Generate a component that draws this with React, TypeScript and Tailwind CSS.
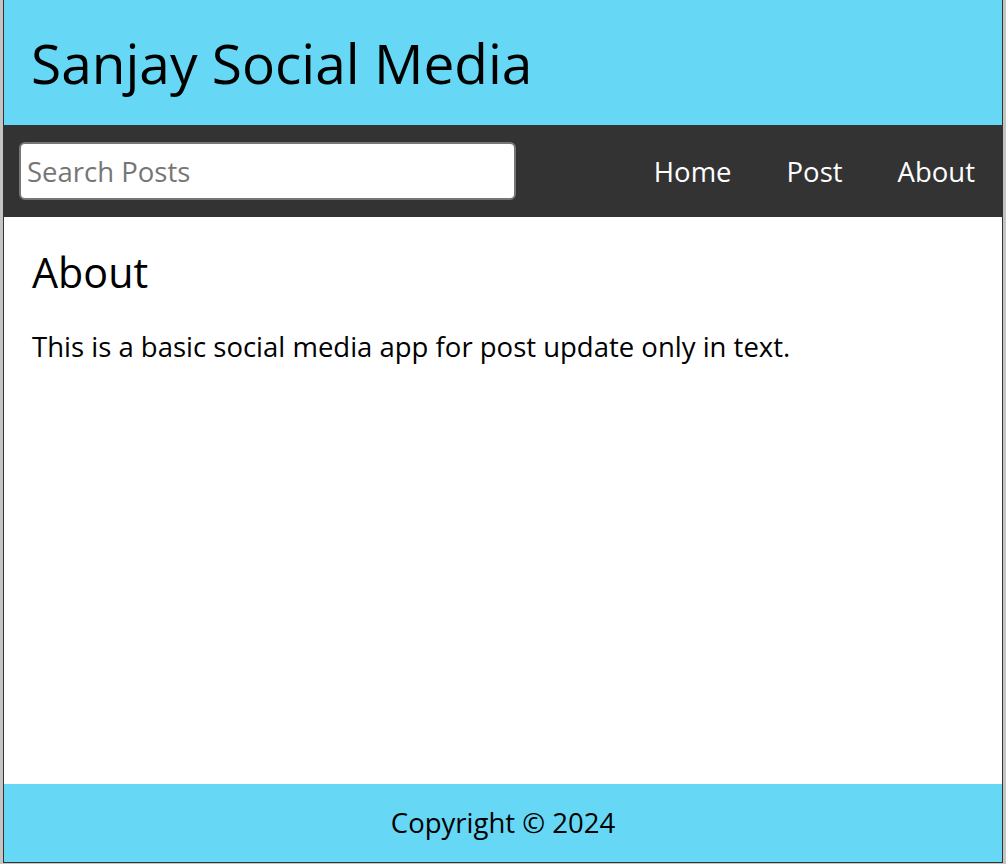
import React from 'react';

const App: React.FC = () => {
  return (
    <div className="h-[864px] bg-[#c4c4c4] px-[3px] pb-[1px] font-['Open_Sans',sans-serif]">
      <div className="h-full flex flex-col bg-white border-x border-b border-[#333]">
        {/* Header */}
        <header className="h-[125px] shrink-0 bg-[#66d8f5] flex items-center px-[27px]">
          <h1 className="text-[55px] leading-none text-black">Sanjay Social Media</h1>
        </header>

        {/* Nav */}
        <nav className="h-[92px] shrink-0 bg-[#333] flex items-center justify-between pl-[15px] pr-[27px]">
          <form className="w-[497px]" onSubmit={e => e.preventDefault()}>
            <input
              type="text"
              placeholder="Search Posts"
              className="w-full h-[58px] rounded-[6px] border-2 border-[#767676] bg-white px-[6px] text-[27.5px] text-black placeholder-[#767676] outline-none"
            />
          </form>
          <ul className="flex items-center gap-[55px] pt-[2px] text-[27.5px] text-white">
            <li>Home</li>
            <li>Post</li>
            <li>About</li>
          </ul>
        </nav>

        {/* Main */}
        <main className="flex-1 px-[28px] pt-[31px]">
          <h2 className="text-[41.25px] leading-[1.2] mb-[28px]">About</h2>
          <p className="text-[27.5px] leading-normal">This is a basic social media app for post update only in text.</p>
        </main>

        {/* Footer */}
        <footer className="h-[78px] shrink-0 bg-[#66d8f5] flex items-center justify-center">
          <p className="text-[27.5px] text-black">Copyright © 2024</p>
        </footer>
      </div>
    </div>
  );
};

export default App;
